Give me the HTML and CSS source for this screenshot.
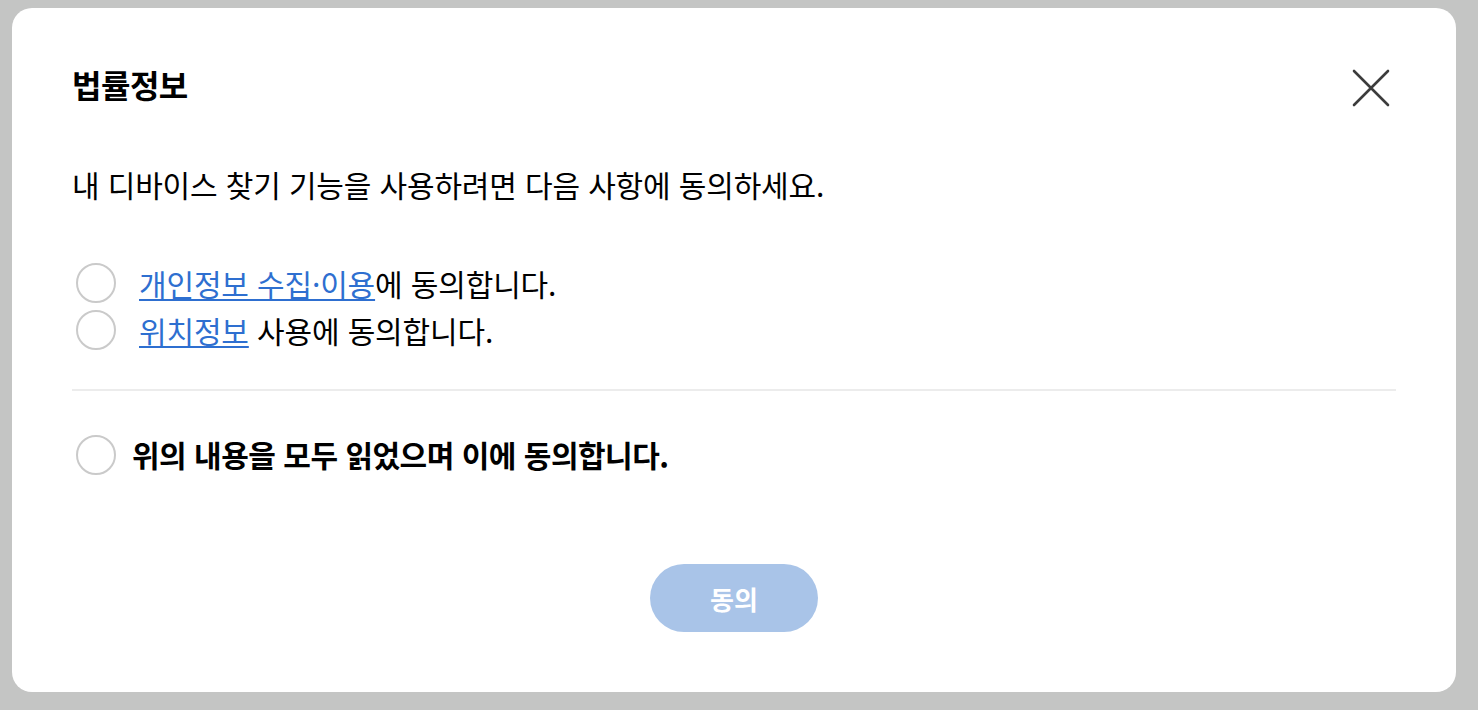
FILE: index.html
```html
<!DOCTYPE html>
<html lang="ko">
<head>
<meta charset="utf-8">
<title>법률정보</title>
<link rel="stylesheet" href="styles.css">
</head>
<body>
<div class="dialog">
  <div class="header">
    <h1 class="title">법률정보</h1>
    <button class="close" aria-label="닫기">
      <svg width="38" height="38" viewBox="0 0 38 38"><path d="M2 2 L36 36 M36 2 L2 36" stroke="#3c3c3c" stroke-width="2.6" stroke-linecap="round" fill="none"/></svg>
    </button>
  </div>
  <p class="intro">내 디바이스 찾기 기능을 사용하려면 다음 사항에 동의하세요.</p>
  <div class="items">
    <label class="row"><span class="radio"></span><span class="label"><a href="#" class="link">개인정보 수집·이용</a>에 동의합니다.</span></label>
    <label class="row"><span class="radio"></span><span class="label"><a href="#" class="link">위치정보</a> 사용에 동의합니다.</span></label>
  </div>
  <hr class="divider">
  <label class="row all"><span class="radio"></span><span class="label-bold">위의 내용을 모두 읽었으며 이에 동의합니다.</span></label>
  <div class="actions">
    <button class="agree">동의</button>
  </div>
</div>
</body>
</html>
```
FILE: styles.css
```css
html, body { margin: 0; padding: 0; }
body {
  background: #c4c5c4;
  font-family: "Noto Sans CJK KR", "Noto Sans", sans-serif;
  color: #000;
  padding: 8px 22px 18px 12px;
  height: 710px;
  box-sizing: border-box;
}
.dialog {
  background: #fff;
  border-radius: 20px;
  height: 684px;
  box-sizing: border-box;
  padding: 56px 60px 0 60px;
  display: flex;
  flex-direction: column;
}
.header {
  display: flex;
  justify-content: space-between;
  align-items: center;
  height: 40px;
}
.title {
  margin: 0;
  font-size: 32px;
  font-weight: 700;
  letter-spacing: -0.5px;
  line-height: 40px;
}
.close {
  border: 0;
  background: none;
  padding: 0;
  margin-right: 6px;
  margin-top: 8px;
  width: 38px;
  height: 38px;
  cursor: pointer;
}
.intro {
  margin: 60px 0 0 0;
  font-size: 30px;
  line-height: 40px;
  letter-spacing: -0.15px;
}
.items {
  margin-top: 59px;
  display: flex;
  flex-direction: column;
  gap: 7px;
}
.row {
  display: flex;
  align-items: center;
  height: 40px;
}
.radio {
  width: 36px;
  height: 36px;
  border: 2px solid #cacaca;
  border-radius: 50%;
  margin-left: 4px;
  flex: none;
}
.label {
  margin-left: 23px;
  font-size: 30px;
  letter-spacing: -0.15px;
  line-height: 40px;
}
.link {
  color: #2e6fd0;
  text-decoration: underline;
  text-underline-offset: 3px;
  text-decoration-thickness: 2px;
}
.divider {
  margin: 39px 0 0 0;
  border: 0;
  border-top: 2px solid #ececec;
}
.all {
  margin-top: 44px;
}
.label-bold {
  margin-left: 16px;
  font-size: 30px;
  font-weight: 700;
  letter-spacing: -0.5px;
  line-height: 40px;
  margin-top: -3px;
}
.actions {
  display: flex;
  justify-content: center;
  margin-top: 89px;
}
.agree {
  width: 168px;
  height: 68px;
  border: 0;
  border-radius: 34px;
  background: #a9c4e8;
  color: #fff;
  font-family: "Noto Sans CJK KR", "Noto Sans", sans-serif;
  font-size: 26px;
  font-weight: 700;
}
```
